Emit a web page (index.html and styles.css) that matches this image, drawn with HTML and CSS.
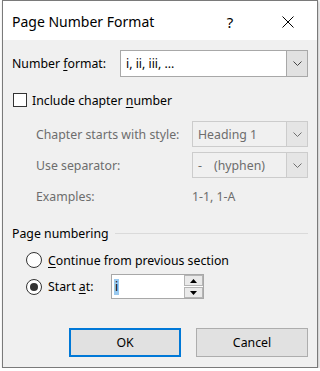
FILE: index.html
```html
<!DOCTYPE html>
<html lang="en">
<head>
  <meta charset="UTF-8" />
  <title>Page Number Format</title>
  <link rel="stylesheet" href="styles.css">
</head>
<body>
  <div class="dialog">
    <div class="titlebar">
      <span class="title">Page Number Format</span>
      <span class="tb-btn help">?</span>
      <span class="tb-btn close">
        <svg width="12" height="12" viewBox="0 0 12 12"><path d="M0.5 0.5 L11.5 11.5 M11.5 0.5 L0.5 11.5" stroke="#000" stroke-width="1" fill="none"/></svg>
      </span>
    </div>

    <div class="content">
      <div class="format-row">
        <span class="lbl-format">Number <u>f</u>ormat:</span>
        <div class="combo">
          <span class="combo-value">i, ii, iii, ...</span>
          <span class="combo-btn">
            <svg width="9" height="5" viewBox="0 0 9 5"><path d="M0.5 0.5 L4.5 4.5 L8.5 0.5" stroke="#444" fill="none"/></svg>
          </span>
        </div>
      </div>

      <div class="check-row">
        <span class="checkbox"></span>
        <span class="check-text">Include chapter <u>n</u>umber</span>
      </div>

      <div class="chapter">
        <div class="crow">
          <span class="lbl-c">Chapter starts with style:</span>
          <div class="combo disabled">
            <span class="combo-value">Heading 1</span>
            <span class="combo-btn">
              <svg width="9" height="5" viewBox="0 0 9 5"><path d="M0.5 0.5 L4.5 4.5 L8.5 0.5" stroke="#707070" fill="none"/></svg>
            </span>
          </div>
        </div>
        <div class="crow sep-row">
          <span class="lbl-c">Use separator:</span>
          <div class="combo disabled">
            <span class="combo-value">-<span class="sep-name">(hyphen)</span></span>
            <span class="combo-btn">
              <svg width="9" height="5" viewBox="0 0 9 5"><path d="M0.5 0.5 L4.5 4.5 L8.5 0.5" stroke="#707070" fill="none"/></svg>
            </span>
          </div>
        </div>
        <div class="crow examples">
          <span class="lbl-c">Examples:</span>
          <span class="ex-value">1-1, 1-A</span>
        </div>
      </div>

      <div class="group-head">
        <span>Page numbering</span>
        <span class="rule"></span>
      </div>

      <div class="radio-row">
        <span class="radio"></span>
        <span class="radio-text"><u>C</u>ontinue from previous section</span>
      </div>
      <div class="radio-row start-row">
        <span class="radio checked"></span>
        <span class="radio-text start-lbl">Start <u>a</u>t:</span>
        <div class="spin">
          <span class="spin-value"><span class="sel">i</span></span>
          <span class="spin-btns">
            <span class="spin-btn">
              <svg width="7" height="4" viewBox="0 0 7 4"><path d="M0 4 L3.5 0 L7 4 Z" fill="#000"/></svg>
            </span>
            <span class="spin-btn">
              <svg width="7" height="4" viewBox="0 0 7 4"><path d="M0 0 L3.5 4 L7 0 Z" fill="#000"/></svg>
            </span>
          </span>
        </div>
      </div>

      <div class="buttons">
        <button class="btn default">OK</button>
        <button class="btn">Cancel</button>
      </div>
    </div>
  </div>
</body>
</html>
```

FILE: styles.css
```css
body {
  margin: 0;
  background: #ffffff;
  font-family: "Noto Sans", "Open Sans", sans-serif;
  font-size: 12.3px;
  color: #000000;
  overflow: hidden;
}

u {
  text-underline-offset: 2px;
}

.dialog {
  margin-left: 2px;
  width: 316px;
  height: 368px;
  box-sizing: border-box;
  border: 1px solid #7a7a7a;
  box-shadow: 1px 1px 3px rgba(0, 0, 0, 0.25);
  display: flex;
  flex-direction: column;
}

.titlebar {
  height: 39px;
  box-sizing: border-box;
  padding-top: 2px;
  background: #ffffff;
  display: flex;
  align-items: center;
}

.title {
  flex: 1;
  padding-left: 9px;
  font-size: 14px;
}

.tb-btn {
  width: 58px;
  display: flex;
  justify-content: center;
  align-items: center;
}

.help {
  font-size: 15px;
}

.close svg {
  display: block;
}

.content {
  flex: 1;
  background: #f0f0f0;
  padding: 10px 9px 0;
}

.format-row {
  display: flex;
  align-items: center;
  height: 27px;
}

.lbl-format {
  width: 108px;
}

.combo {
  flex: 1;
  height: 100%;
  box-sizing: border-box;
  border: 1px solid #a8a8a8;
  background: #ffffff;
  display: flex;
}

.combo-value {
  flex: 1;
  padding-left: 5px;
  display: flex;
  align-items: center;
}

.combo-btn {
  width: 20px;
  background: #e1e1e1;
  border-left: 1px solid #a8a8a8;
  display: flex;
  align-items: center;
  justify-content: center;
}

.combo.disabled {
  background: #f0f0f0;
  border-color: #cccccc;
  color: #6d6d6d;
}

.combo.disabled .combo-btn {
  background: #e5e5e5;
  border-left-color: #cccccc;
}

.sep-name {
  margin-left: 12px;
}

.check-row {
  margin-top: 15px;
  height: 16px;
  display: flex;
  align-items: center;
}

.checkbox {
  width: 14px;
  height: 14px;
  box-sizing: border-box;
  margin-left: 1px;
  border: 1px solid #333333;
  background: #ffffff;
}

.check-text {
  margin-left: 5px;
}

.chapter {
  margin-top: 13px;
  padding-left: 24px;
  color: #6d6d6d;
}

.crow {
  display: flex;
  align-items: center;
  height: 26px;
}

.lbl-c {
  width: 156px;
}

.sep-row {
  margin-top: 5px;
}

.examples {
  margin-top: 10px;
  height: 16px;
}

.group-head {
  margin-top: 21px;
  height: 16px;
  display: flex;
  align-items: center;
}

.rule {
  flex: 1;
  height: 1px;
  margin-left: 6px;
  background: #dadada;
}

.radio-row {
  margin-top: 11px;
  height: 16px;
  padding-left: 14px;
  display: flex;
  align-items: center;
}

.radio {
  width: 16px;
  height: 16px;
  box-sizing: border-box;
  border: 1px solid #333333;
  border-radius: 50%;
  background: #ffffff;
  display: flex;
  align-items: center;
  justify-content: center;
}

.radio.checked::after {
  content: "";
  width: 8px;
  height: 8px;
  border-radius: 50%;
  background: #333333;
}

.radio-text {
  margin-left: 6px;
}

.start-row {
  margin-top: 6px;
  height: 25px;
}

.start-lbl {
  width: 63px;
}

.spin {
  width: 93px;
  height: 25px;
  box-sizing: border-box;
  border: 1px solid #a8a8a8;
  background: #ffffff;
  display: flex;
}

.spin-value {
  flex: 1;
  padding-left: 2px;
  display: flex;
  align-items: center;
}

.sel {
  background: #99c9ef;
  padding: 0 1px;
  line-height: 16px;
}

.spin-btns {
  width: 19px;
  display: flex;
  flex-direction: column;
  gap: 1px;
}

.spin-btn {
  flex: 1;
  box-sizing: border-box;
  border: 1px solid #b5b5b5;
  background: #eaeaea;
  display: flex;
  align-items: center;
  justify-content: center;
}

.buttons {
  margin-top: 29px;
  display: flex;
  justify-content: flex-end;
  gap: 15px;
}

.btn {
  width: 112px;
  height: 29px;
  box-sizing: border-box;
  border: 1px solid #adadad;
  background: #e1e1e1;
  font-family: inherit;
  font-size: 12.3px;
  color: #000000;
  padding: 0;
}

.btn.default {
  border: 2px solid #0078d7;
}
```
